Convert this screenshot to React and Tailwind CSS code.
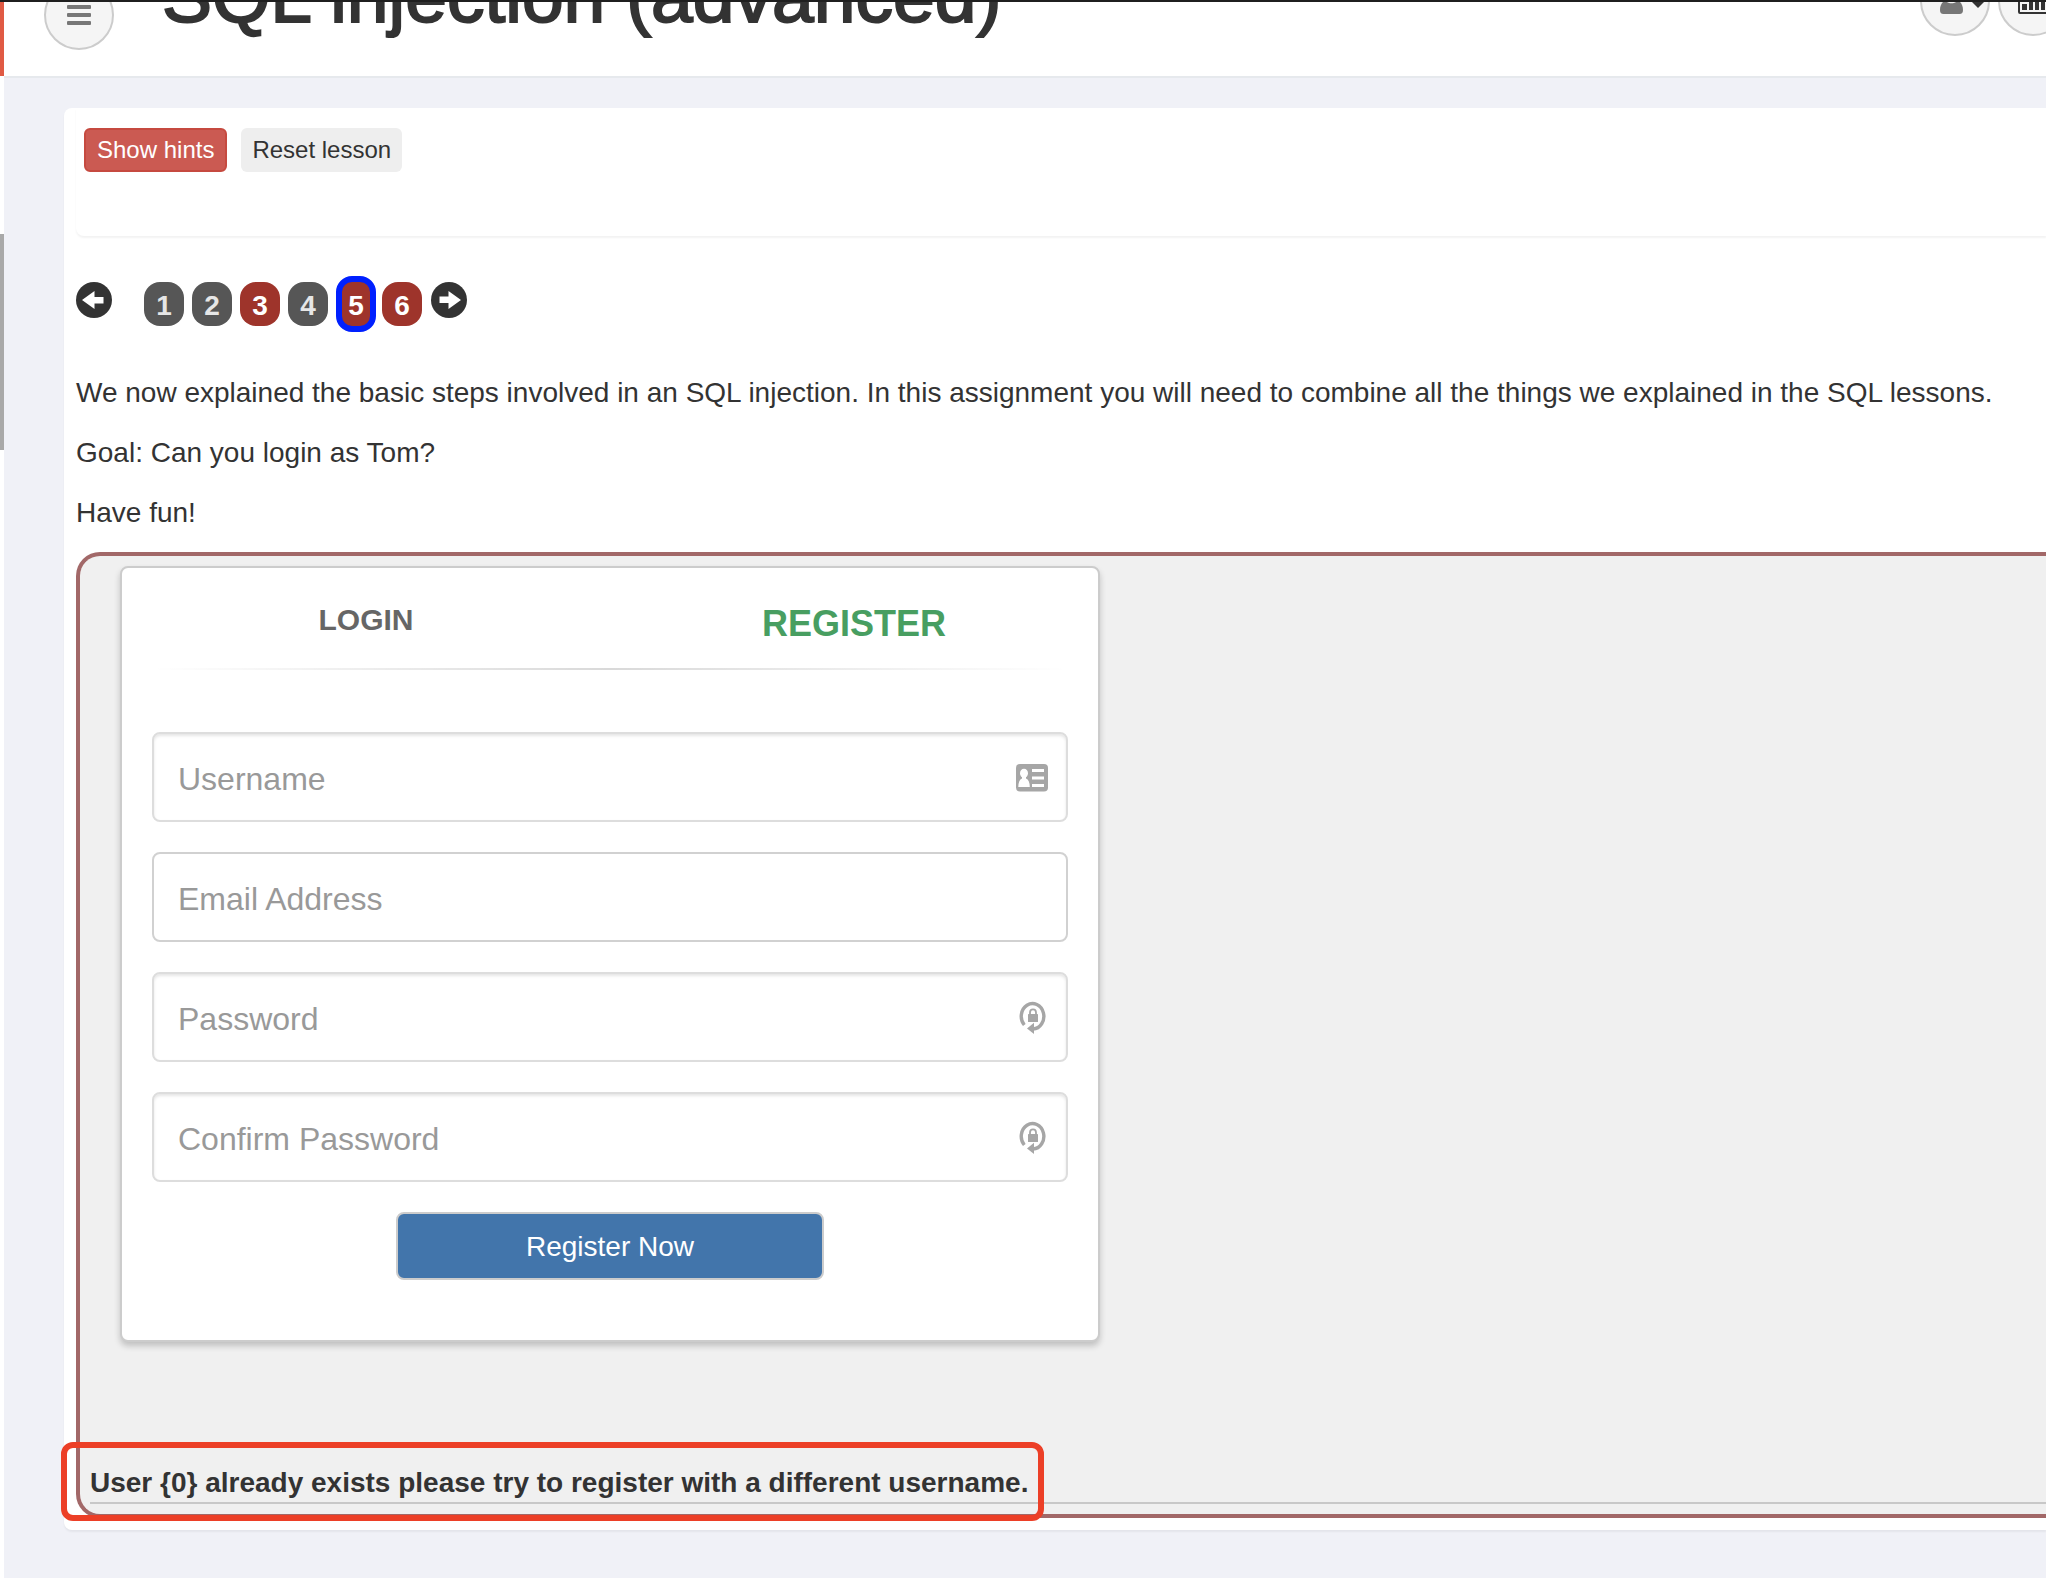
import { useState } from "react";

const lessonPages = [
  { page: 1, assignment: false },
  { page: 2, assignment: false },
  { page: 3, assignment: true },
  { page: 4, assignment: false },
  { page: 5, assignment: true },
  { page: 6, assignment: true },
];

const registerFields = [
  { id: "username", label: "Username", type: "text", icon: "card" },
  { id: "email", label: "Email Address", type: "email", icon: null },
  { id: "password", label: "Password", type: "password", icon: "lock" },
  { id: "confirm", label: "Confirm Password", type: "password", icon: "lock" },
];

function ArrowCircle({ flip }) {
  return (
    <svg viewBox="0 0 36 36" className={flip ? "size-9 rotate-180" : "size-9"} aria-hidden="true">
      <circle cx="18" cy="18" r="18" fill="#333" />
      <path d="M6 18 L18.500 9 V15 H27.500 V21.500 H18.500 V27 Z" fill="#fff" />
    </svg>
  );
}

function CardIcon() {
  return (
    <svg viewBox="0 0 32 28" className="w-8 h-7" aria-hidden="true">
      <rect width="32" height="27.500" rx="4" fill="#a6a6a6" />
      <ellipse cx="8" cy="9.300" rx="4" ry="4.600" fill="#fff" />
      <path d="M6 12h4v2.500c2.500 1 3.800 4 3.800 8.500H2.300c0-4.500 1.200-7.500 3.700-8.500z" fill="#fff" />
      <path d="M16 5h12v3H16zM16 12.500h12v3H16zM16 20h12v3H16z" fill="#fff" />
    </svg>
  );
}

function LockIcon() {
  return (
    <svg viewBox="0 0 32 34" className="w-8 h-[34px]" aria-hidden="true">
      <path d="M8.300 24 A11.300 12.700 0 1 1 17 28" fill="none" stroke="#a6a6a6" strokeWidth="3.400" />
      <path d="M11 27.500 L18 21.800 V33 Z" fill="#a6a6a6" />
      <rect x="12" y="13" width="10" height="8" rx="0.600" fill="#a6a6a6" />
      <path d="M14 14v-2.500a3 3.200 0 0 1 6 0V14" fill="none" stroke="#a6a6a6" strokeWidth="1.800" />
    </svg>
  );
}

export default function App() {
  const [current, setCurrent] = useState(5);

  return (
    <div className="min-h-screen flex flex-col bg-[#f0f1f7] text-[#333] overflow-hidden font-['Liberation_Sans',Arial,sans-serif]">
      <div className="h-0.5 bg-[#1f1f1f]" />

      <div className="flex flex-1">
        {/* Sidebar edge */}
        <aside className="w-1 shrink-0 bg-white">
          <div className="h-[74px] bg-[#e05a44]" />
          <div className="mt-[158px] h-[216px] bg-[#a9a9a9]" />
        </aside>

        <div className="flex-1 min-w-0">
          {/* Header */}
          <header className="h-19 bg-white border-b-2 border-[#e6e9ed] overflow-hidden">
            <div className="-mt-[46px] flex items-start pl-10">
              <button aria-label="Toggle menu"
                className="mt-6 size-[70px] shrink-0 rounded-full border-2 border-[#ccc] bg-[#f5f5f5] flex items-center justify-center">
                <svg viewBox="0 0 24 20" className="w-6 h-5" fill="#777" aria-hidden="true">
                  <rect width="24" height="4" rx="1" />
                  <rect y="8" width="24" height="4" rx="1" />
                  <rect y="16" width="24" height="4" rx="1" />
                </svg>
              </button>
              <h1 className="ml-12 text-[75px] leading-20 font-medium whitespace-nowrap [-webkit-text-stroke:2px_#333]">SQL injection (advanced)</h1>
              <div className="mt-2.5 ml-auto -mr-[22px] flex gap-2">
                <button aria-label="User menu" className="size-[70px] rounded-full border-2 border-[#ccc] bg-[#f5f5f5] flex items-center justify-center">
                  <svg viewBox="0 0 60 28" className="w-15 h-7" aria-hidden="true">
                    <circle cx="26.500" cy="8" r="6.500" fill="#777" />
                    <path d="M20 13.500c2 2 4 2.700 6.500 2.700s4.500-.7 6.500-2.700c3 1.500 5 5 5 9.500 0 2.500-1 4-3.500 4h-16c-2.500 0-3.500-1.500-3.500-4 0-4.500 2-8 5-9.500z" fill="#777" />
                    <path d="M45 13h16l-8 8z" fill="#333" />
                  </svg>
                </button>
                <button aria-label="Reports" className="size-[70px] rounded-full border-2 border-[#ccc] bg-[#f5f5f5] flex items-center justify-center">
                  <svg viewBox="0 0 32 28" className="w-8 h-7" aria-hidden="true">
                    <rect x="2" y="1" width="29" height="25" rx="1" fill="none" stroke="#333" strokeWidth="2" />
                    <path d="M5 17h5v6H5zM12 12h4v11h-4zM18 9h4v14h-4zM24 6h4v17h-4z" fill="#333" />
                  </svg>
                </button>
              </div>
            </div>
          </header>

          <main className="pl-15 pt-[30px] pb-12">
            <div className="bg-white rounded-l-lg pl-3 pb-3 shadow-[0_2px_2px_rgba(0,0,0,0.05)]">
              {/* Lesson controls */}
              <div className="h-32 rounded-bl-lg pl-2 pt-5 flex items-start gap-3.5 shadow-[0_2px_2px_rgba(0,0,0,0.05)]">
                <button className="h-11 px-[11px] rounded-md border-2 border-[#c64a40] bg-[#cb5a52] text-white text-2xl">Show hints</button>
                <button className="h-11 px-[11px] rounded-md bg-[#eee] text-2xl">Reset lesson</button>
              </div>

              {/* Page navigation */}
              <nav className="pt-10 h-[137px] flex items-start">
                <button aria-label="Previous page" className="mt-1.5 mr-8" onClick={() => setCurrent(Math.max(1, current - 1))}>
                  <ArrowCircle />
                </button>
                <div className="h-14 flex items-center gap-2">
                  {lessonPages.map(p => (
                    <button key={p.page} onClick={() => setCurrent(p.page)}
                      className={`w-10 rounded-2xl text-[28px] leading-11 pt-0.5 font-bold flex justify-center
                        ${p.assignment ? "bg-[#9e342b] text-white" : "bg-[#565656] text-[#e6e6e6]"}
                        ${p.page === current ? "h-14 -mr-0.5 border-6 border-[#0020ff]" : "h-11"}`}>
                      {p.page}
                    </button>
                  ))}
                </div>
                <button aria-label="Next page" className="mt-1.5 ml-[9px]" onClick={() => setCurrent(Math.min(6, current + 1))}>
                  <ArrowCircle flip />
                </button>
              </nav>

              {/* Lesson text */}
              <div className="flex flex-col gap-5 text-[28px] leading-10">
                <p>We now explained the basic steps involved in an SQL injection. In this assignment you will need to combine all the things we explained in the SQL lessons.</p>
                <p>Goal: Can you login as Tom?</p>
                <p>Have fun!</p>
              </div>

              {/* Assignment */}
              <section className="mt-[19px] pl-2.5 pt-2.5 pb-2.5 border-4 border-r-0 border-[#a26868] rounded-l-3xl bg-[#f0f0f0]">
                <div className="ml-[30px] w-[980px] max-w-full px-[30px] pb-15 rounded-lg border-2 border-[#ccc] bg-white shadow-[0_4px_6px_rgba(0,0,0,0.2)]">
                  <div className="-mx-[30px] h-25 flex text-center font-bold">
                    <a href="#login" className="flex-1 pt-8 text-3xl leading-10 text-[#666]">LOGIN</a>
                    <a href="#register" className="flex-1 pt-9 text-4xl leading-10 text-[#489e61]">REGISTER</a>
                  </div>
                  <div className="h-0.5 bg-linear-to-r from-transparent via-black/15 to-transparent" />

                  <form className="mt-[62px] flex flex-col gap-[30px]" onSubmit={e => e.preventDefault()}>
                    {registerFields.map(f => (
                      <div key={f.id} className="relative">
                        <input id={f.id} type={f.type} placeholder={f.label} aria-label={f.label}
                          className={`block w-full h-[90px] px-6 pt-1 rounded-lg border-2 bg-white text-[32px] placeholder:text-[#999]
                            ${f.icon ? "border-[#ddd] shadow-[inset_0_2px_3px_rgba(0,0,0,0.1)]" : "border-[#d1d1d1]"}`} />
                        {f.icon && (
                          <span className="absolute inset-y-0 right-5 pt-0.5 flex items-center">
                            {f.icon === "card" ? <CardIcon /> : <LockIcon />}
                          </span>
                        )}
                      </div>
                    ))}
                    <button type="submit"
                      className="self-center w-[428px] h-17 pt-0.5 rounded-lg border-2 border-[#ccc] bg-[#4275ab] text-white text-[28px]">
                      Register Now
                    </button>
                  </form>
                </div>

                {/* Feedback */}
                <div className="mt-[118px] flex border-b-2 border-[#c8c8c8]">
                  <p className="relative pt-1 text-[28px] leading-[38px] font-bold">
                    User {"{0}"} already exists please try to register with a different username.
                    <span className="absolute -left-[29px] -right-4 -top-[18px] -bottom-[19px] border-6 border-[#ec3f27] rounded-xl pointer-events-none" />
                  </p>
                </div>
              </section>
            </div>
          </main>
        </div>
      </div>
    </div>
  );
}
